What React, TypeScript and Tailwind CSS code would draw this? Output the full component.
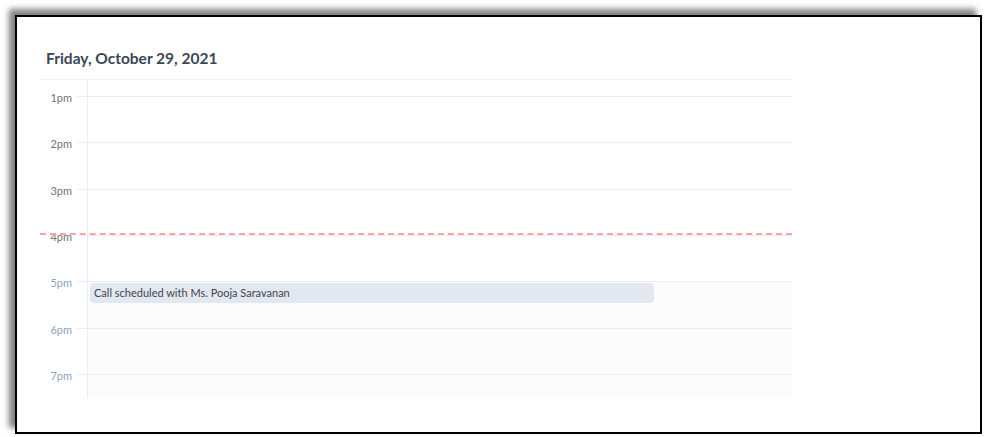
const hours = [
  { label: '1pm', past: true },
  { label: '2pm', past: true },
  { label: '3pm', past: true },
  { label: '4pm', past: true },
  { label: '5pm', past: false, event: 'Call scheduled with Ms. Pooja Saravanan' },
  { label: '6pm', past: false },
  { label: '7pm', past: false, last: true },
];

const App = () => {
  return (
    <div className="w-[985px] h-[437px] bg-white pt-[15px] pl-[15px] font-['Lato',_'Noto_Sans',_sans-serif]">
      <div className="w-[967px] h-[419px] border-2 border-black bg-white shadow-[-6px_-6px_6px_rgba(0,0,0,0.5)]">
        <h1 className="mt-[31px] ml-[29px] text-[15.5px] leading-[20px] font-bold text-[#3b4757]">
          Friday, October 29, 2021
        </h1>

        {/* Day grid */}
        <div className="relative mt-[11px] ml-[23px] w-[752px] border-t border-[#edf1f6]">
          <div className="flex h-[16px]">
            <div className="w-[47px]" />
            <div className="flex-1 border-l border-[#e8eef5]" />
          </div>

          {hours.map((h) => (
            <div key={h.label} className={`flex ${h.last ? 'h-[24px]' : 'h-[46.33px]'}`}>
              <div
                className={
                  h.past
                    ? 'w-[37px] pr-[5px] -mt-[4px] text-right text-[11px] leading-[12px] text-neutral-500'
                    : 'w-[37px] pr-[5px] -mt-[4px] text-right text-[11px] leading-[12px] text-slate-400'
                }
              >
                {h.label}
              </div>
              <div className="w-[10px] border-t border-[#e8eef5]" />
              <div
                className={
                  h.past
                    ? 'flex-1 border-t border-l border-[#e8eef5] bg-white'
                    : 'flex-1 border-t border-l border-[#e8eef5] bg-[#fcfcfd]'
                }
              >
                {h.event && (
                  <div className="mt-[1px] ml-[2px] w-[564px] h-[20px] rounded-[4px] bg-[#e3e8f0] px-[4px] text-[11px] leading-[20px] text-[#3f4451]">
                    {h.event}
                  </div>
                )}
              </div>
            </div>
          ))}

          {/* Current time marker */}
          <div className="absolute left-0 right-0 top-[153px] border-t-2 border-dashed border-red-300" />
        </div>
      </div>
    </div>
  );
};

export default App;
